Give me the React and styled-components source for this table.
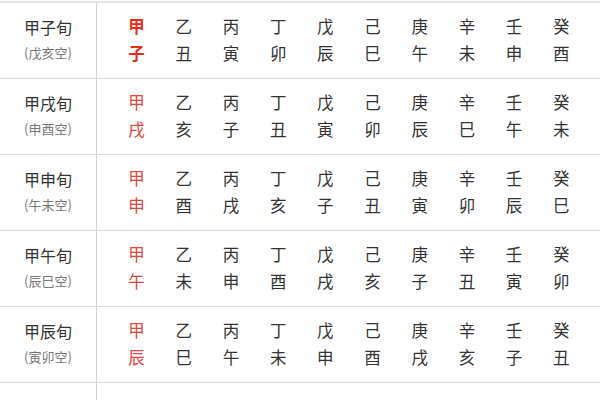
import React from 'react'
import styled, { createGlobalStyle } from 'styled-components'

const GlobalStyle = createGlobalStyle`
  html, body {
    margin: 0;
    padding: 0;
    background: #fff;
    overflow: hidden;
  }
  body {
    font-family: "Noto Sans CJK SC", "Noto Sans", sans-serif;
  }
`

const Table = styled.div`
  width: 600px;
  height: 400px;
  overflow: hidden;
  padding-top: 1px;
  box-sizing: border-box;
`

const Row = styled.div`
  display: flex;
  height: 75px;
  border-top: ${p => (p.$first ? '2px solid #e4e4e4' : '1px solid #d9d9d9')};
`

const NameCell = styled.div`
  width: 97px;
  border-right: 1px solid #d2d2d2;
  display: flex;
  flex-direction: column;
  align-items: center;
  justify-content: center;
  padding-bottom: 1px;
  box-sizing: border-box;
`

const Name = styled.div`
  font-size: 16px;
  line-height: 26px;
  color: #333;
`

const Empty = styled.div`
  font-size: 13px;
  line-height: 26px;
  color: #777;
`

const Grid = styled.div`
  flex: 1;
  display: grid;
  grid-template-columns: repeat(10, 47.2px);
  grid-template-rows: 27px 27px;
  align-content: center;
  padding-left: 16px;
  padding-bottom: 1px;
`

const Char = styled.span`
  font-size: 16.5px;
  line-height: 27px;
  text-align: center;
  color: ${p => (p.$red ? (p.$strong ? '#e5301c' : '#d84a3e') : '#333')};
  font-weight: ${p => (p.$red && p.$strong ? 700 : 400)};
`

const stems = '甲乙丙丁戊己庚辛壬癸'.split('')
const branches = '子丑寅卯辰巳午未申酉戌亥'.split('')

const xun = [
  { start: 0, empty: '戊亥空' },
  { start: 10, empty: '申酉空' },
  { start: 8, empty: '午未空' },
  { start: 6, empty: '辰巳空' },
  { start: 4, empty: '寅卯空' },
]

function App() {
  return (
    <>
      <GlobalStyle />
      <Table>
        {xun.map((x, r) => {
          const bs = stems.map((_, i) => branches[(x.start + i) % 12])
          return (
            <Row key={r} $first={r === 0}>
              <NameCell>
                <Name>甲{branches[x.start]}旬</Name>
                <Empty>({x.empty})</Empty>
              </NameCell>
              <Grid>
                {stems.map((s, i) => (
                  <Char key={'s' + i} $red={i === 0} $strong={r === 0}>{s}</Char>
                ))}
                {bs.map((b, i) => (
                  <Char key={'b' + i} $red={i === 0} $strong={r === 0}>{b}</Char>
                ))}
              </Grid>
            </Row>
          )
        })}
        {/* next row starts just below the visible area */}
        <Row>
          <NameCell />
        </Row>
      </Table>
    </>
  )
}

export default App
